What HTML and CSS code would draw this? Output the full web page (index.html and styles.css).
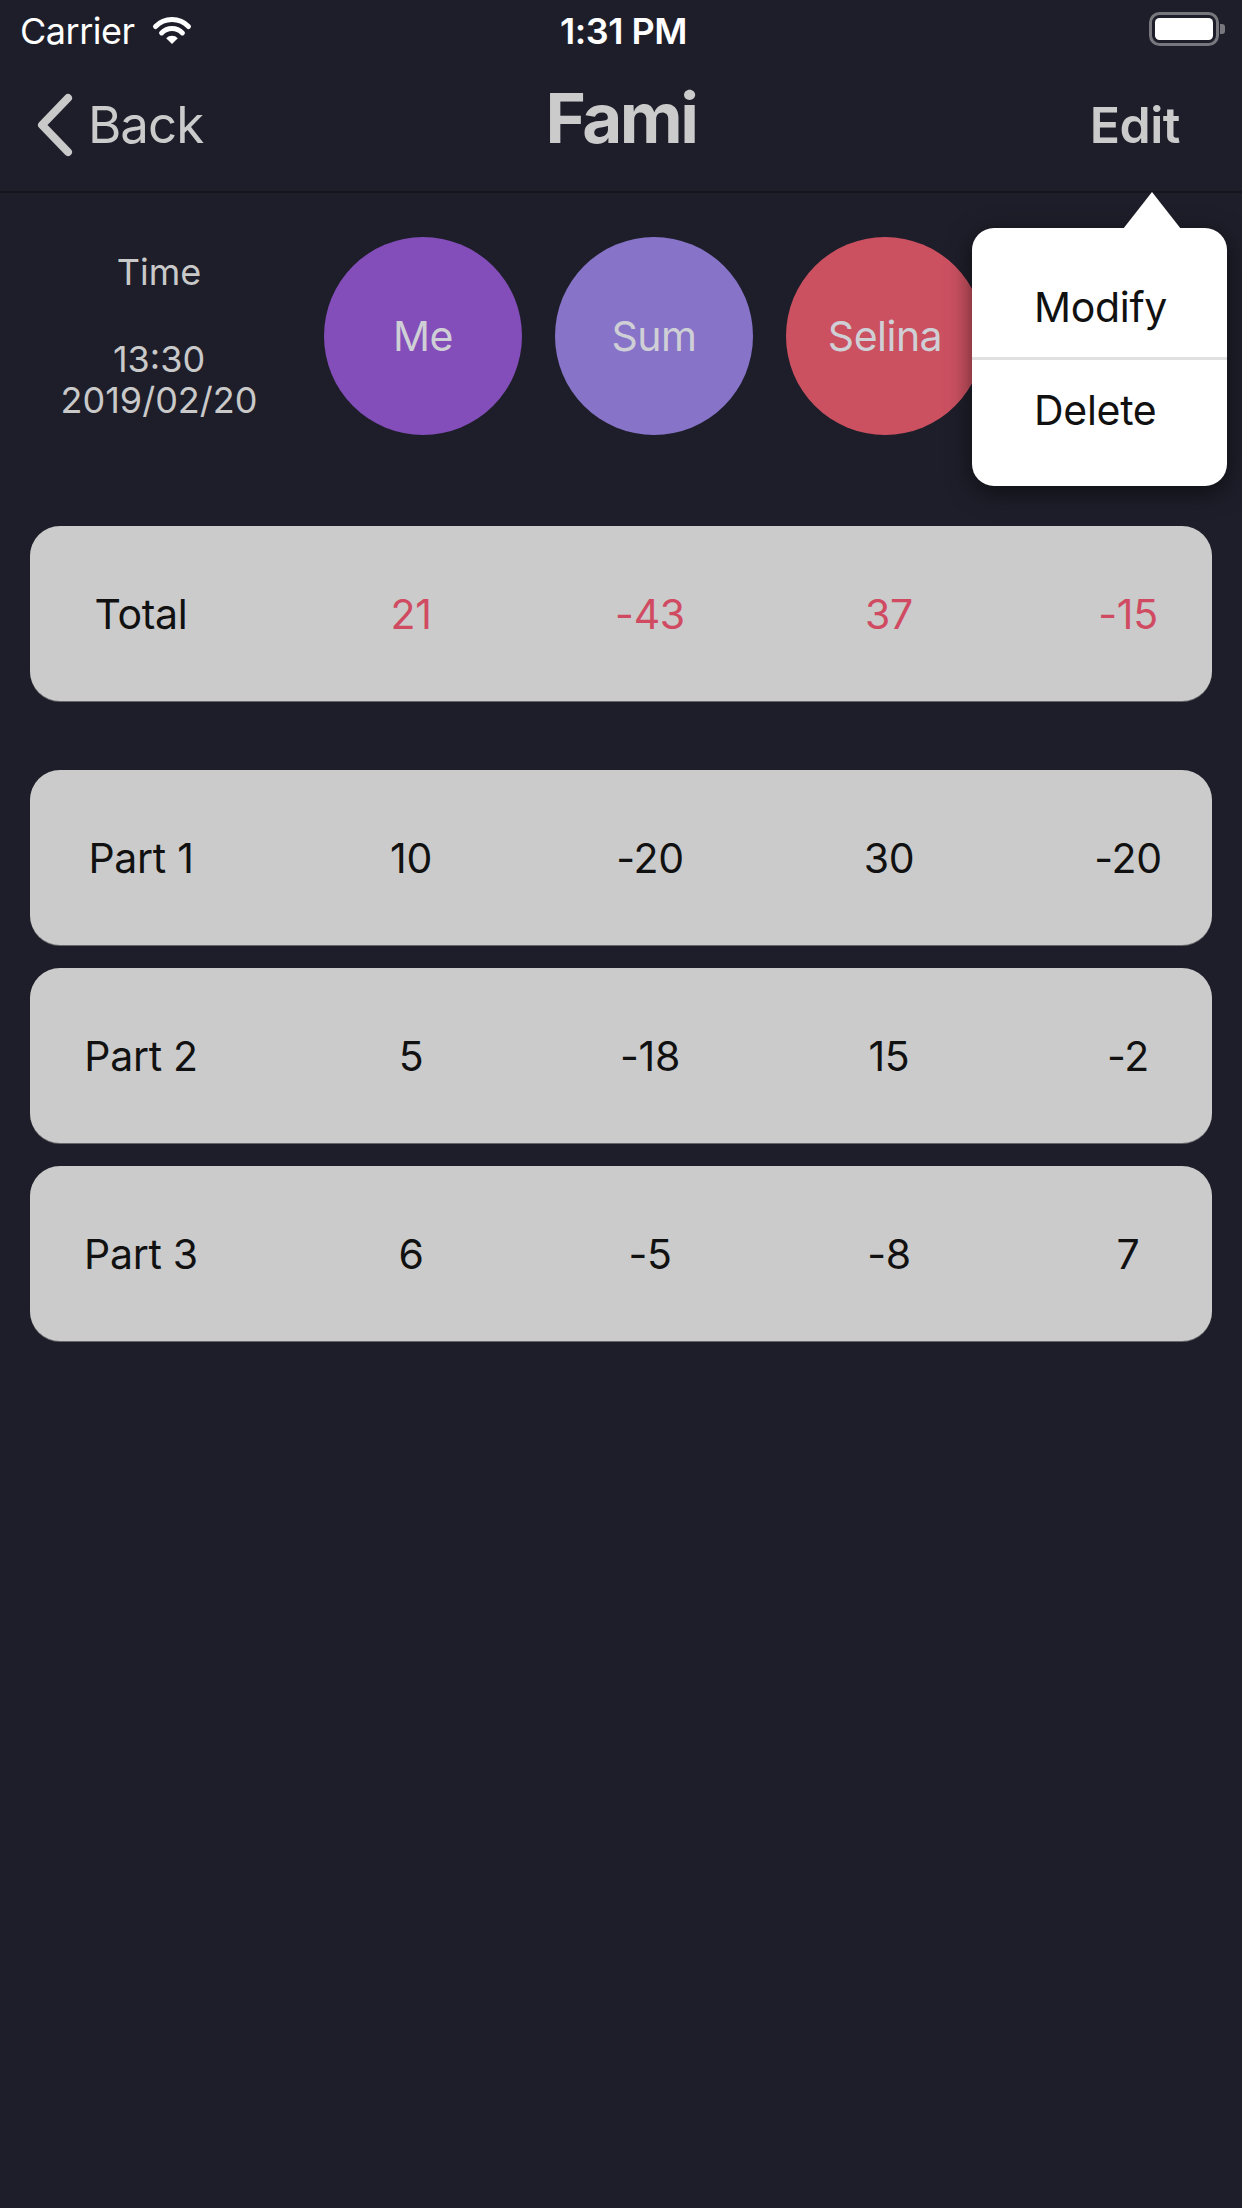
FILE: index.html
```html
<!DOCTYPE html>
<html>
<head>
<meta charset="utf-8">
<link rel="stylesheet" href="styles.css">
</head>
<body>
<div class="status">
  <div class="status-left">
    <span class="carrier">Carrier</span>
    <svg class="wifi" width="42" height="30" viewBox="0 0 42 30">
      <path d="M4.5 11.5 A23 23 0 0 1 37.5 11.5" fill="none" stroke="#fff" stroke-width="5" stroke-linecap="round"/>
      <path d="M10.6 17.9 A14.5 14.5 0 0 1 31.4 17.9" fill="none" stroke="#fff" stroke-width="5" stroke-linecap="round"/>
      <path d="M21 29 L15.2 23.2 A8 8 0 0 1 26.8 23.2 Z" fill="#fff"/>
    </svg>
  </div>
  <div class="clock">1:31 PM</div>
  <div class="status-right">
    <svg class="battery" width="78" height="36" viewBox="0 0 78 36">
      <rect x="1.5" y="1.5" width="67" height="31" rx="9" fill="none" stroke="#77777d" stroke-width="3"/>
      <rect x="6" y="6" width="58" height="22" rx="4.5" fill="#fff"/>
      <path d="M71 12 h2 a3 3 0 0 1 3 3 v4 a3 3 0 0 1 -3 3 h-2 Z" fill="#77777d"/>
    </svg>
  </div>
</div>

<nav class="nav">
  <a class="back">
    <svg class="chevron" width="40" height="64" viewBox="0 0 40 64">
      <path d="M34 5 L8 32 L34 59" fill="none" stroke="#c9c9c9" stroke-width="8" stroke-linecap="round" stroke-linejoin="round"/>
    </svg>
    <span class="back-label">Back</span>
  </a>
  <h1 class="title">Fami</h1>
  <a class="edit">Edit</a>
</nav>

<section class="summary">
  <div class="time-col">
    <div class="time-label">Time</div>
    <div class="time-value">13:30</div>
    <div class="time-value">2019/02/20</div>
  </div>
  <div class="people">
    <div class="person person-me">Me</div>
    <div class="person person-sum">Sum</div>
    <div class="person person-selina">Selina</div>
    <div class="person person-other"></div>
  </div>
</section>

<div class="popup">
  <div class="popup-item">Modify</div>
  <div class="popup-divider"></div>
  <div class="popup-item">Delete</div>
</div>

<main class="cards">
  <div class="card card-total">
    <div class="cell label">Total</div>
    <div class="cell red">21</div>
    <div class="cell red">-43</div>
    <div class="cell red">37</div>
    <div class="cell red">-15</div>
  </div>
  <div class="parts">
    <div class="card">
      <div class="cell label">Part 1</div>
      <div class="cell">10</div>
      <div class="cell">-20</div>
      <div class="cell">30</div>
      <div class="cell">-20</div>
    </div>
    <div class="card">
      <div class="cell label">Part 2</div>
      <div class="cell">5</div>
      <div class="cell">-18</div>
      <div class="cell">15</div>
      <div class="cell">-2</div>
    </div>
    <div class="card">
      <div class="cell label">Part 3</div>
      <div class="cell">6</div>
      <div class="cell">-5</div>
      <div class="cell">-8</div>
      <div class="cell">7</div>
    </div>
  </div>
</main>
</body>
</html>
```

FILE: styles.css
```css
* { box-sizing: border-box; }

html, body {
  margin: 0;
  padding: 0;
}

body {
  width: 1242px;
  min-height: 2208px;
  background: #1e1e2a;
  font-family: "Inter", "Roboto", "Liberation Sans", sans-serif;
  position: relative;
  color: #c9c9c9;
}

/* status bar */
.status {
  height: 62px;
  display: grid;
  grid-template-columns: 1fr auto 1fr;
  align-items: center;
  padding: 0 15px 0 20px;
  color: #fff;
  font-size: 36px;
  line-height: 44px;
}
.status-left {
  display: flex;
  align-items: center;
  gap: 16px;
}
.carrier {
  font-weight: 400;
  letter-spacing: -0.5px;
}
.wifi { display: block; margin-top: -2px; }
.clock {
  font-weight: 600;
  letter-spacing: -0.5px;
}
.status-right {
  display: flex;
  justify-content: flex-end;
}
.battery { display: block; margin-top: -2px; }

/* nav bar */
.nav {
  height: 131px;
  border-bottom: 2px solid #15151d;
  display: grid;
  grid-template-columns: 1fr auto 1fr;
  align-items: baseline;
  padding: 14px 34px 0 34px;
  color: #cbcbcb;
}
.back {
  display: inline-flex;
  align-items: baseline;
  gap: 14px;
  font-size: 51px;
  line-height: 64px;
  letter-spacing: -1px;
  justify-self: start;
}
.chevron {
  align-self: center;
  display: block;
}
.title {
  margin: 0;
  font-size: 69px;
  line-height: 85px;
  font-weight: 700;
  letter-spacing: -2.5px;
}
.edit {
  justify-self: end;
  margin-right: 28px;
  font-size: 50px;
  font-weight: 600;
  letter-spacing: -0.5px;
}

/* summary with time and people */
.summary {
  display: flex;
  align-items: center;
  padding: 44px 0 0 30px;
}
.time-col {
  width: 258px;
  margin-right: 36px;
  text-align: center;
  font-size: 36px;
  line-height: 41px;
  color: #c9c9c9;
}
.time-label {
  margin-bottom: 46px;
}
.people {
  display: flex;
  gap: 33px;
}
.person {
  width: 198px;
  height: 198px;
  border-radius: 50%;
  display: flex;
  align-items: center;
  justify-content: center;
  font-size: 41px;
  color: #cfcfd6;
  letter-spacing: -0.5px;
}
.person-me { background: #834eb9; }
.person-sum { background: #8774c9; }
.person-selina { background: #cb5161; }
.person-other { background: #4a90c9; }

/* popover */
.popup {
  position: absolute;
  left: 972px;
  top: 228px;
  width: 255px;
  height: 258px;
  background: #fff;
  border-radius: 22px;
  box-shadow: 0 6px 24px rgba(0, 0, 0, 0.55);
  padding-top: 29px;
}
.popup::before {
  content: "";
  position: absolute;
  left: 151px;
  top: -36px;
  width: 58px;
  height: 37px;
  background: #fff;
  clip-path: polygon(50% 0, 100% 100%, 0 100%);
}
.popup-item {
  height: 100px;
  display: flex;
  align-items: center;
  padding-left: 62px;
  font-size: 41px;
  color: #111;
  letter-spacing: -0.3px;
}
.popup-divider {
  height: 3px;
  background: #e0e0e0;
}

/* cards */
.cards {
  padding: 91px 30px 0 30px;
}
.parts {
  margin-top: 69px;
  display: flex;
  flex-direction: column;
  gap: 23px;
}
.card {
  height: 175px;
  border-radius: 30px;
  background: #cbcbcb;
  display: grid;
  grid-template-columns: 222px repeat(4, 160px);
  column-gap: 79px;
  align-items: center;
  text-align: center;
  font-size: 41px;
  color: #111;
  box-shadow: 0 1px 0 rgba(150, 150, 150, 0.6);
}
.cell {
  letter-spacing: -0.3px;
}
.red {
  color: #d04b62;
}
```
